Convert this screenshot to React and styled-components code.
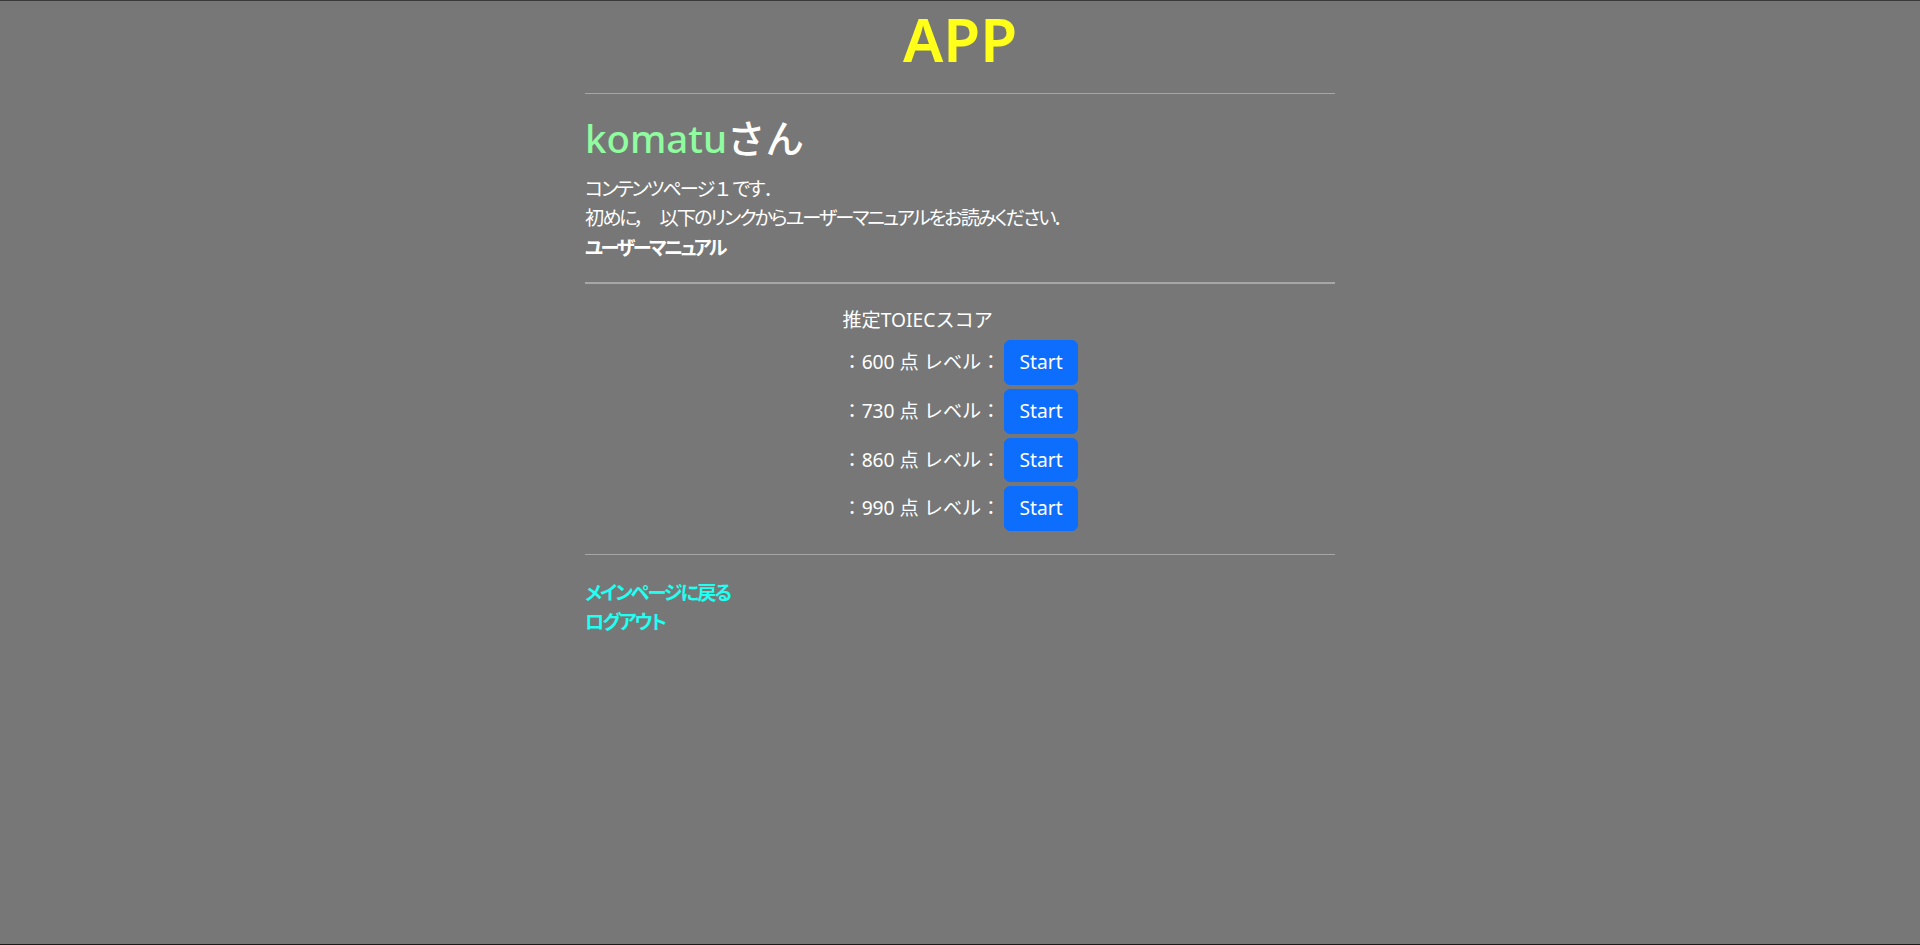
import React from "react";
import styled, { createGlobalStyle } from "styled-components";

const GlobalStyle = createGlobalStyle`
  html, body {
    margin: 0;
    padding: 0;
    background-color: #777777;
  }
  body {
    font-family: "Noto Sans", "Noto Sans CJK JP", sans-serif;
    font-size: 19.2px;
    line-height: 28.8px;
    color: #ffffff;
  }
`;

const Page = styled.div`
  min-height: 100vh;
  box-sizing: border-box;
  border-top: 1px solid #3a3a3a;
  border-bottom: 1px solid #1a1a1a;
`;

const Container = styled.main`
  width: 750px;
  margin: 0 auto;
`;

const Title = styled.h1`
  margin: 2px 0 0;
  font-size: 60px;
  line-height: 72px;
  font-weight: 600;
  color: #ffff1a;
  text-align: center;
`;

const Rule = styled.hr`
  margin: ${(props) => props.$space || "0"};
  border: 0;
  border-top: ${(props) => (props.$thick ? "2px" : "1px")} solid #a6a6a6;
`;

const Greeting = styled.h2`
  margin: 21px 0 13px;
  font-size: 38.4px;
  line-height: 46px;
  font-weight: 500;
`;

const UserName = styled.span`
  color: #90fca0;
`;

const Intro = styled.div`
  margin: 0;
`;

/* narrow Japanese text, close to the condensed UI font of the original */
const Line = styled.p`
  margin: 0;
  line-height: 29.4px;
  font-feature-settings: "palt";
  letter-spacing: ${(props) => (props.$bold ? "-2.6px" : "-2px")};
  font-weight: ${(props) => (props.$bold ? 700 : 400)};
`;

const Wide = styled.span`
  font-feature-settings: normal;
  letter-spacing: 0;
`;

const ScoreSection = styled.section`
  display: flex;
  justify-content: center;
  margin: 22px 0 23px;
`;

const ScoreTable = styled.div`
  display: grid;
  grid-template-columns: auto auto;
  align-items: center;
  row-gap: 4px;
`;

const ScoreHeading = styled.div`
  grid-column: 1 / span 2;
  margin-bottom: 1px;
`;

const ScoreLabel = styled.div`
  padding-right: 4px;
  white-space: nowrap;
`;

const StartButton = styled.button`
  font-family: "Noto Sans", "Noto Sans CJK JP", sans-serif;
  font-size: 19.2px;
  line-height: 28.8px;
  padding: 7px 14px;
  color: #ffffff;
  background-color: #0d6efd;
  border: 1px solid #0d6efd;
  border-radius: 6px;
  cursor: pointer;

  &:hover {
    background-color: #0b5ed7;
  }
`;

const Links = styled.nav`
  display: flex;
  flex-direction: column;
  align-items: flex-start;
  margin-top: 24px;
`;

const NavLink = styled.a`
  color: #1ffff2;
  font-weight: 700;
  text-decoration: none;
  line-height: 28.8px;
  font-feature-settings: "palt";
  letter-spacing: -2px;
`;

const scores = [600, 730, 860, 990];

const App = () => {
  return (
    <Page>
      <GlobalStyle />
      <Container>
        <Title>APP</Title>
        <Rule $space="18px 0 0" />
        <Greeting>
          <UserName>komatu</UserName>さん
        </Greeting>
        <Intro>
          <Line>
            コンテンツページ<Wide>１</Wide>です<Wide>．</Wide>
          </Line>
          <Line>初めに，　以下のリンクからユーザーマニュアルをお読みください．</Line>
          <Line $bold>ユーザーマニュアル</Line>
        </Intro>
        <Rule $thick $space="20px 0 0" />
        <ScoreSection>
          <ScoreTable>
            <ScoreHeading>推定TOIECスコア</ScoreHeading>
            {scores.map((score) => (
              <React.Fragment key={score}>
                <ScoreLabel>：{score} 点 レベル：</ScoreLabel>
                <StartButton type="button">Start</StartButton>
              </React.Fragment>
            ))}
          </ScoreTable>
        </ScoreSection>
        <Rule />
        <Links>
          <NavLink href="#">メインページに戻る</NavLink>
          <NavLink href="#">ログアウト</NavLink>
        </Links>
      </Container>
    </Page>
  );
};

export default App;
